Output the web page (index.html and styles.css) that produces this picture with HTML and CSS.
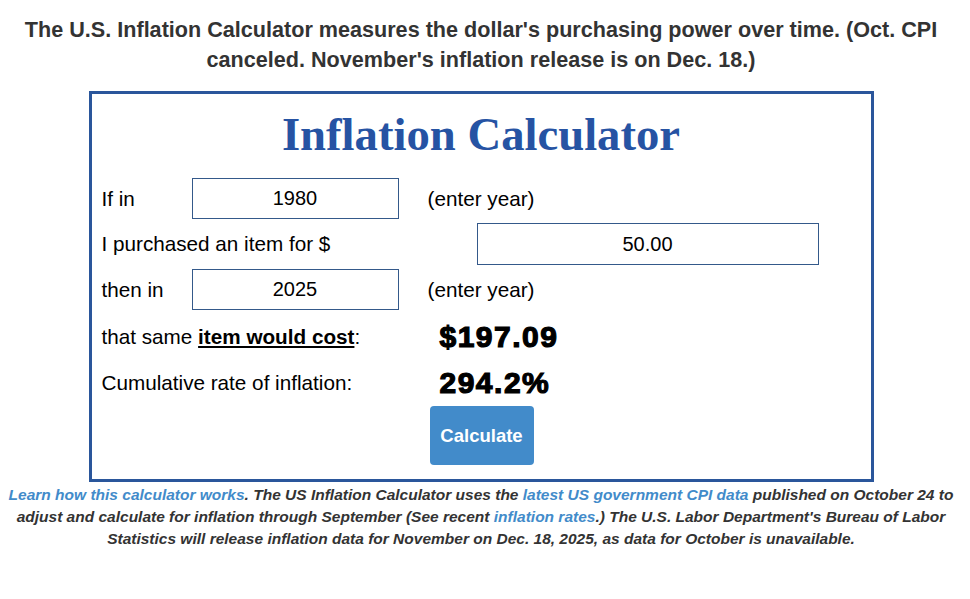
FILE: index.html
```html
<!DOCTYPE html>
<html lang="en">
<head>
    <meta charset="UTF-8">
    <meta name="viewport" content="width=device-width, initial-scale=1.0">
    <title>Inflation Calculator</title>
    <link rel="stylesheet" href="styles.css">
</head>
<body>

    <div class="page">
        <p class="intro">The U.S. Inflation Calculator measures the dollar's purchasing power over time. (Oct. CPI canceled. November's inflation release is on Dec. 18.)</p>

        <div class="calc">
            <h1>Inflation Calculator</h1>

            <div class="calc-grid">
                <label for="year1">If in</label>
                <input type="text" id="year1" class="year" value="1980">
                <span class="hint">(enter year)</span>

                <label for="amount" class="wide">I purchased an item for $</label>
                <div class="cell"><input type="text" id="amount" class="amount" value="50.00"></div>

                <label for="year2">then in</label>
                <input type="text" id="year2" class="year" value="2025">
                <span class="hint">(enter year)</span>

                <span class="wide">that same <u><b>item would cost</b></u>:</span>
                <span class="result">$197.09</span>

                <span class="wide">Cumulative rate of inflation:</span>
                <span class="result">294.2%</span>

                <div class="cell btn-cell"><button>Calculate</button></div>
            </div>
        </div>

        <p class="note"><a href="#">Learn how this calculator works</a>. The US Inflation Calculator uses the <a href="#">latest US government CPI data</a> published on October 24 to adjust and calculate for inflation through September (See recent <a href="#">inflation rates</a>.) The U.S. Labor Department's Bureau of Labor Statistics will release inflation data for November on Dec. 18, 2025, as data for October is unavailable.</p>
    </div>

</body>
</html>
```

FILE: styles.css
```css
body {
    font-family: "Liberation Sans", Arial, sans-serif;
    background-color: #fff;
    color: #000;
    margin: 0;
    padding: 0;
}
.page {
    width: 962px;
}
.intro {
    font-size: 21.6px;
    font-weight: bold;
    color: #333;
    line-height: 30px;
    text-align: center;
    margin: 15px 16px 0 16px;
}
.calc {
    width: 779px;
    margin: 16px auto 0;
    border: 3px solid #2a569b;
    padding: 14px 0;
}
.calc h1 {
    font-family: "Liberation Serif", "Times New Roman", serif;
    font-size: 46.7px;
    font-weight: bold;
    color: #2653a3;
    text-align: center;
    line-height: 53px;
    margin: 0 0 17px 0;
}
.calc-grid {
    display: grid;
    grid-template-columns: 90px 236px 1fr;
    grid-template-rows: 41px 42px 41px 46px 38px 59px;
    row-gap: 4px;
    align-items: center;
    font-size: 20.7px;
    padding-left: 10px;
}
.wide {
    grid-column: 1 / 3;
}
.cell {
    grid-column: 3;
}
input {
    font-family: "Liberation Sans", Arial, sans-serif;
    font-size: 20px;
    text-align: center;
    border: 1px solid #34598a;
    padding: 0;
    box-sizing: border-box;
    color: #000;
}
.year {
    width: 207px;
    height: 41px;
}
.amount {
    width: 342px;
    height: 42px;
    margin-left: 49px;
}
.hint {
    color: #000;
}
.result {
    font-size: 30px;
    font-weight: bold;
    letter-spacing: 1.5px;
    -webkit-text-stroke: 1.2px #000;
    margin-left: 12px;
}
.btn-cell {
    align-self: stretch;
}
button {
    height: 59px;
    width: 104px;
    margin-left: 2px;
    background-color: #428bca;
    color: white;
    border: none;
    border-radius: 4px;
    font-family: "Liberation Sans", Arial, sans-serif;
    font-size: 18.5px;
    font-weight: bold;
    cursor: pointer;
}
.note {
    font-size: 15.5px;
    font-weight: bold;
    font-style: italic;
    color: #333;
    line-height: 22px;
    text-align: center;
    margin: 2px 0 0 0;
}
.note a {
    color: #428bca;
    text-decoration: none;
}
```
